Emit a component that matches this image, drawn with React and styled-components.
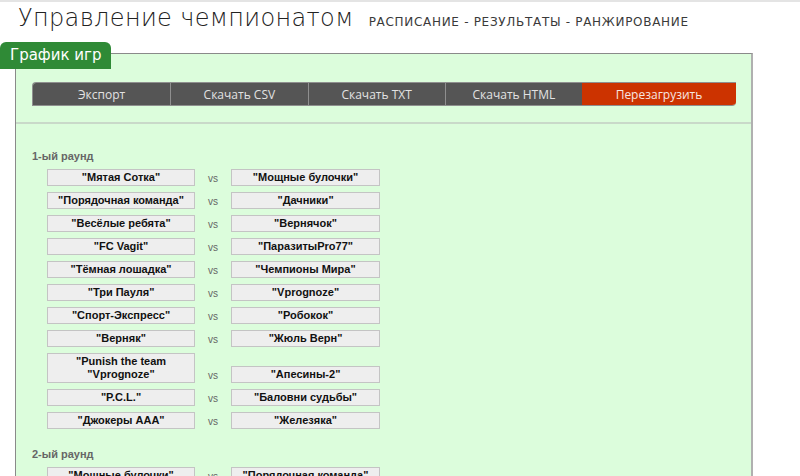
import React from "react";
import styled, { createGlobalStyle } from "styled-components";

const Global = createGlobalStyle`
  html, body { margin: 0; padding: 0; background: #fff; }
  body { font-family: "Liberation Sans", Arial, sans-serif; }
`;

const Page = styled.div`
  border-top: 2px solid #e4e4e4;
  width: 800px;
  height: 474px;
  overflow: hidden;
`;

const Header = styled.header`
  display: flex;
  align-items: baseline;
  gap: 15px;
  padding: 2px 0 0 18px;
  height: 39px;
  box-sizing: border-box;
`;

const Title = styled.h1`
  margin: 0;
  font-family: "DejaVu Sans", sans-serif;
  font-weight: 300;
  font-size: 24px;
  color: #222;
  letter-spacing: 0.35px;
`;

const Subtitle = styled.span`
  font-family: "DejaVu Sans", sans-serif;
  font-size: 12px;
  letter-spacing: 0.7px;
  text-transform: uppercase;
  color: #3a3a3a;
`;

const Frame = styled.section`
  position: relative;
  padding-top: 12px;
`;

const Tab = styled.div`
  position: absolute;
  left: 0;
  top: 1px;
  width: 111px;
  height: 27px;
  box-sizing: border-box;
  padding: 4px 0 0 10px;
  background: #2f8a36;
  color: #fff;
  border-radius: 6px 6px 0 0;
  font-family: "DejaVu Sans", sans-serif;
  font-size: 15px;
  z-index: 1;
`;

const Panel = styled.div`
  margin-left: 15px;
  width: 738px;
  box-sizing: border-box;
  border: 1px solid #8a8a8a;
  border-right: 2px solid #b0b0b0;
  border-bottom: none;
  background: #dcfddc;
  height: 430px;
`;

const ToolbarArea = styled.div`
  padding: 28px 15px 16px 16px;
  border-bottom: 2px solid #c9d9c9;
`;

const Toolbar = styled.div`
  display: grid;
  grid-template-columns: repeat(4, 1fr) 154px;
  height: 24px;
  border: 1px solid #8f8f8f;
  border-right: none;
  border-radius: 4px 0 4px 0;
  overflow: hidden;
  box-sizing: border-box;
`;

const ToolButton = styled.div`
  display: flex;
  align-items: center;
  justify-content: center;
  background: ${(p) => (p.$danger ? "#cc3300" : "#555555")};
  color: ${(p) => (p.$danger ? "#f6e6e0" : "#e2e2e2")};
  border-left: ${(p) => (p.$first || p.$danger ? "none" : "1px solid #8f8f8f")};
  font-family: "Open Sans", sans-serif;
  font-size: 12px;
  margin: ${(p) => (p.$danger ? "-1px 0" : "0")};
`;

const Rounds = styled.div`
  padding: 26px 16px 0 16px;
`;

const Round = styled.div`
  margin-bottom: 19px;
`;

const RoundTitle = styled.div`
  font-size: 11px;
  font-weight: bold;
  color: #666;
  line-height: 13px;
  margin-bottom: 6px;
`;

const Matches = styled.div`
  display: flex;
  flex-direction: column;
  gap: 6px;
  padding-left: 15px;
`;

const Match = styled.div`
  display: flex;
  align-items: flex-end;
`;

const Team = styled.div`
  width: ${(p) => p.$w}px;
  box-sizing: border-box;
  background: #eeeeee;
  border: 1px solid #c4c4c4;
  padding: 1px 4px;
  text-align: center;
  font-size: 11px;
  font-weight: bold;
  line-height: 13px;
  color: #111;
`;

const Vs = styled.div`
  width: 36px;
  text-align: center;
  font-size: 10px;
  color: #666;
  line-height: 13px;
  padding-bottom: 1px;
`;

const rounds = [
  {
    title: "1-ый раунд",
    matches: [
      ["Мятая Сотка", "Мощные булочки"],
      ["Порядочная команда", "Дачники"],
      ["Весёлые ребята", "Вернячок"],
      ["FC Vagit", "ПаразитыPro77"],
      ["Тёмная лошадка", "Чемпионы Мира"],
      ["Три Пауля", "Vprognoze"],
      ["Спорт-Экспресс", "Робокок"],
      ["Верняк", "Жюль Верн"],
      ["Punish the team \"Vprognoze", "Апесины-2"],
      ["P.C.L.", "Баловни судьбы"],
      ["Джокеры AAA", "Железяка"],
    ],
  },
  {
    title: "2-ый раунд",
    matches: [["Мощные булочки", "Порядочная команда"]],
  },
];

const buttons = ["Экспорт", "Скачать CSV", "Скачать TXT", "Скачать HTML", "Перезагрузить"];

export default function App() {
  return (
    <Page>
      <Global />
      <Header>
        <Title>Управление чемпионатом</Title>
        <Subtitle>Расписание - Результаты - Ранжирование</Subtitle>
      </Header>
      <Frame>
        <Tab>График игр</Tab>
        <Panel>
          <ToolbarArea>
            <Toolbar>
              {buttons.map((b, i) => (
                <ToolButton key={b} $first={i === 0} $danger={i === buttons.length - 1}>
                  {b}
                </ToolButton>
              ))}
            </Toolbar>
          </ToolbarArea>
          <Rounds>
            {rounds.map((r) => (
              <Round key={r.title}>
                <RoundTitle>{r.title}</RoundTitle>
                <Matches>
                  {r.matches.map(([a, b]) => (
                    <Match key={a + b}>
                      <Team $w={148}>"{a}"</Team>
                      <Vs>vs</Vs>
                      <Team $w={149}>"{b}"</Team>
                    </Match>
                  ))}
                </Matches>
              </Round>
            ))}
          </Rounds>
        </Panel>
      </Frame>
    </Page>
  );
}
